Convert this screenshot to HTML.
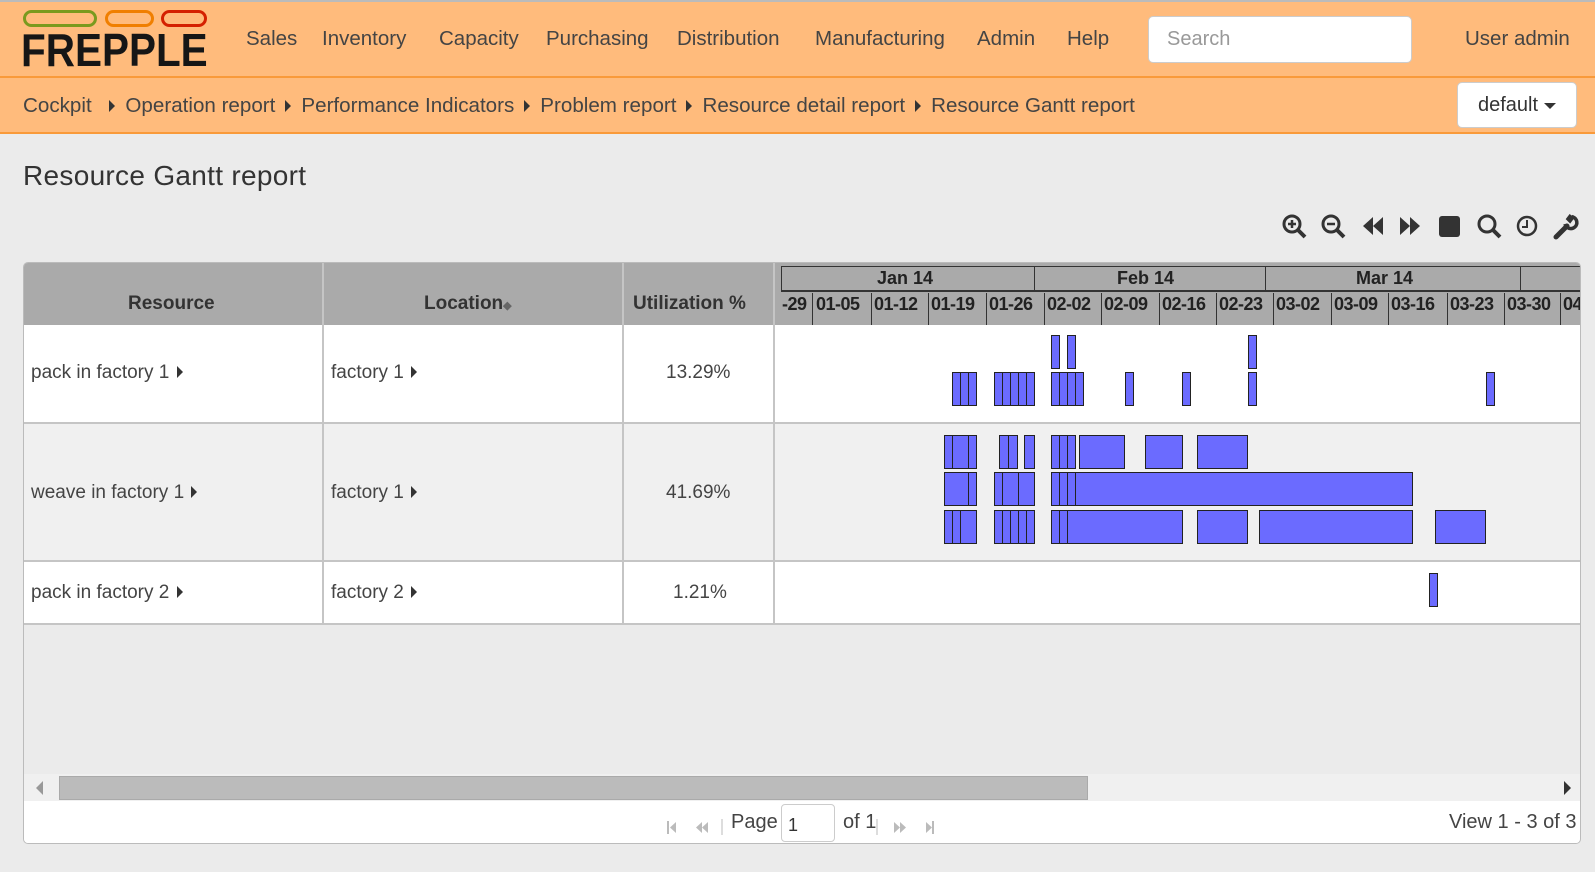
<!DOCTYPE html>
<html><head><meta charset="utf-8"><style>
*{box-sizing:border-box;margin:0;padding:0}
body{width:1595px;height:872px;background:#ebebeb;font-family:"Liberation Sans",sans-serif;color:#333;position:relative;overflow:hidden}
.a{position:absolute;white-space:nowrap}
.hdr{left:0;top:0;width:1595px;height:78px;background:#ffbb7c;border-top:2px solid #bbb;border-bottom:2px solid #f99a3a}
.bc{left:0;top:78px;width:1595px;height:56px;background:#ffbb7c;border-bottom:2px solid #f99a3a}
.nav{top:27px;font-size:20.5px;color:#444}
.crumb{top:94px;font-size:20.6px;color:#444}
.tri{display:inline-block;width:0;height:0;border-left:6px solid #333;border-top:6px solid transparent;border-bottom:6px solid transparent;margin:0 10px 1px 10px;vertical-align:middle}
.grid{left:23px;top:262px;width:1558px;height:582px;border:1px solid #bbb;border-radius:5px;background:#ebebeb;overflow:hidden}
.th{background:#aaa;height:62px;top:0}
.cell{font-size:19px;color:#444}
.vl{background:#c5c5c5;width:2px}
.hl{background:#c5c5c5;height:2px}
.b{position:absolute;background:#6b6bff;border:1.5px solid #222}
.wk{top:31px;font-size:18px;font-weight:bold;color:#222;letter-spacing:-0.5px}
.mo{top:5px;font-size:18px;font-weight:bold;color:#222}
.wd{top:30px;width:1px;height:32px;background:#333}
</style></head><body>
<div class="a hdr"></div>
<div class="a bc"></div>
<div class="a" style="left:23px;top:10px;width:74px;height:17px;border:3px solid #7a9a1e;border-radius:9px"></div>
<div class="a" style="left:105px;top:10px;width:49px;height:17px;border:3px solid #f07f00;border-radius:9px"></div>
<div class="a" style="left:161px;top:10px;width:46px;height:17px;border:3px solid #d42000;border-radius:9px"></div>
<div class="a" style="left:21px;top:28px;font-size:46px;font-weight:bold;color:#161616;transform:scaleX(0.88);transform-origin:left;line-height:44px">FREPPLE</div>
<div class="a nav" style="left:246px">Sales</div>
<div class="a nav" style="left:322px">Inventory</div>
<div class="a nav" style="left:439px">Capacity</div>
<div class="a nav" style="left:546px">Purchasing</div>
<div class="a nav" style="left:677px">Distribution</div>
<div class="a nav" style="left:815px">Manufacturing</div>
<div class="a nav" style="left:977px">Admin</div>
<div class="a nav" style="left:1067px">Help</div>
<div class="a" style="left:1148px;top:16px;width:264px;height:47px;background:#fff;border:1px solid #ccc;border-radius:5px;font-size:20px;color:#999;padding:11px 18px">Search</div>
<div class="a nav" style="left:1465px">User admin</div>
<div class="a crumb" style="left:23px">Cockpit <span class="tri" style="margin-left:12px"></span>Operation report<span class="tri"></span>Performance Indicators<span class="tri"></span>Problem report<span class="tri"></span>Resource detail report<span class="tri"></span>Resource Gantt report</div>
<div class="a" style="left:1457px;top:82px;width:120px;height:46px;background:#fff;border:1px solid #ccc;border-radius:5px;font-size:20px;color:#333;padding:11px 0 0 20px">default <span style="display:inline-block;border-top:6px solid #333;border-left:6px solid transparent;border-right:6px solid transparent;vertical-align:middle"></span></div>
<div class="a" style="left:23px;top:160px;font-size:28px;letter-spacing:0.3px;color:#333">Resource Gantt report</div>
<svg class="a" style="left:1280px;top:212px" width="310" height="28" viewBox="0 0 310 28" fill="none" stroke="#333" stroke-width="3">
<circle cx="12" cy="12" r="8"/><line x1="18" y1="18" x2="25" y2="25" stroke-width="4"/><line x1="8" y1="12" x2="16" y2="12" stroke-width="2.5"/><line x1="12" y1="8" x2="12" y2="16" stroke-width="2.5"/>
<g transform="translate(39,0)"><circle cx="12" cy="12" r="8"/><line x1="18" y1="18" x2="25" y2="25" stroke-width="4"/><line x1="8" y1="12" x2="16" y2="12" stroke-width="2.5"/></g>
<path d="M83 14 L93 5 V23 Z M93 14 L103 5 V23Z" fill="#333" stroke="none"/>
<path d="M120 5 L130 14 L120 23Z M130 5 L140 14 L130 23Z" fill="#333" stroke="none"/>
<rect x="159" y="4" width="21" height="21" rx="3" fill="#333" stroke="none"/>
<g transform="translate(196,0)"><circle cx="11" cy="12" r="8"/><line x1="17" y1="18" x2="24" y2="25" stroke-width="4"/></g>
<circle cx="247" cy="14" r="9" stroke-width="2.5"/><path d="M247 8 V15 H242" stroke-width="2"/>
<path d="M276 25 L287 14" stroke-width="5" stroke-linecap="round"/><path d="M285 12 A6 6 0 1 0 293 5 L290 9 L288 7 L291 3" stroke-width="3.5"/>
</svg>
<div class="a grid">
<div class="a th" style="left:0;width:1558px"></div>
<div class="a" style="left:0;top:62px;width:1558px;height:99px;background:#fff"></div>
<div class="a" style="left:0;top:161px;width:1558px;height:138px;background:#f0f0f0"></div>
<div class="a" style="left:0;top:299px;width:1558px;height:63px;background:#fff"></div>
<div class="a hl" style="left:0;top:159px;width:1558px"></div>
<div class="a hl" style="left:0;top:297px;width:1558px"></div>
<div class="a hl" style="left:0;top:360px;width:1558px"></div>
<div class="a vl" style="left:298px;top:0;height:362px"></div>
<div class="a vl" style="left:598px;top:0;height:362px"></div>
<div class="a vl" style="left:749px;top:0;height:362px"></div>
<div class="a cell" style="left:104px;top:30px;font-weight:bold;color:#333">Resource</div>
<div class="a cell" style="left:400px;top:30px;font-weight:bold;color:#333">Location<span style="font-size:11px;color:#666">&#9670;</span></div>
<div class="a cell" style="left:609px;top:30px;font-weight:bold;color:#333">Utilization %</div>
<div class="a cell" style="left:7px;top:99px">pack in factory 1 <span class="tri" style="margin:0 0 2px 2px"></span></div>
<div class="a cell" style="left:307px;top:99px">factory 1 <span class="tri" style="margin:0 0 2px 2px"></span></div>
<div class="a cell" style="left:642px;top:99px">13.29%</div>
<div class="a cell" style="left:7px;top:219px">weave in factory 1 <span class="tri" style="margin:0 0 2px 2px"></span></div>
<div class="a cell" style="left:307px;top:219px">factory 1 <span class="tri" style="margin:0 0 2px 2px"></span></div>
<div class="a cell" style="left:642px;top:219px">41.69%</div>
<div class="a cell" style="left:7px;top:319px">pack in factory 2 <span class="tri" style="margin:0 0 2px 2px"></span></div>
<div class="a cell" style="left:307px;top:319px">factory 2 <span class="tri" style="margin:0 0 2px 2px"></span></div>
<div class="a cell" style="left:649px;top:319px">1.21%</div>
<div class="a" style="left:757px;top:3px;width:801px;height:1px;background:#333"></div>
<div class="a" style="left:757px;top:27px;width:801px;height:2px;background:#333"></div>
<div class="a" style="left:757px;top:3px;width:1px;height:25px;background:#333"></div>
<div class="a" style="left:1010px;top:3px;width:1px;height:25px;background:#333"></div>
<div class="a" style="left:1241px;top:3px;width:1px;height:25px;background:#333"></div>
<div class="a" style="left:1496px;top:3px;width:1px;height:25px;background:#333"></div>
<div class="a mo" style="left:853px">Jan 14</div>
<div class="a mo" style="left:1093px">Feb 14</div>
<div class="a mo" style="left:1332px">Mar 14</div>
<div class="a wk" style="left:758px">-29</div>
<div class="a wk" style="left:792px">01-05</div>
<div class="a wk" style="left:850px">01-12</div>
<div class="a wk" style="left:907px">01-19</div>
<div class="a wk" style="left:965px">01-26</div>
<div class="a wk" style="left:1023px">02-02</div>
<div class="a wk" style="left:1080px">02-09</div>
<div class="a wk" style="left:1138px">02-16</div>
<div class="a wk" style="left:1195px">02-23</div>
<div class="a wk" style="left:1252px">03-02</div>
<div class="a wk" style="left:1310px">03-09</div>
<div class="a wk" style="left:1367px">03-16</div>
<div class="a wk" style="left:1426px">03-23</div>
<div class="a wk" style="left:1483px">03-30</div>
<div class="a wk" style="left:1539px">04</div>
<div class="a wd" style="left:788px"></div>
<div class="a wd" style="left:847px"></div>
<div class="a wd" style="left:904px"></div>
<div class="a wd" style="left:962px"></div>
<div class="a wd" style="left:1020px"></div>
<div class="a wd" style="left:1077px"></div>
<div class="a wd" style="left:1135px"></div>
<div class="a wd" style="left:1192px"></div>
<div class="a wd" style="left:1249px"></div>
<div class="a wd" style="left:1307px"></div>
<div class="a wd" style="left:1364px"></div>
<div class="a wd" style="left:1423px"></div>
<div class="a wd" style="left:1480px"></div>
<div class="a wd" style="left:1536px"></div>
<div class="a" style="left:0;top:511px;width:1558px;height:27px;background:#f0f0f0"></div>
<div class="a" style="left:35px;top:513px;width:1029px;height:24px;background:#bbb;border:1px solid #aaa"></div>
<div class="a" style="left:12px;top:518px;border-right:7px solid #999;border-top:7px solid transparent;border-bottom:7px solid transparent"></div>
<div class="a" style="left:1540px;top:518px;border-left:7px solid #333;border-top:7px solid transparent;border-bottom:7px solid transparent"></div>
<div class="a" style="left:0;top:538px;width:1558px;height:44px;background:#fff"></div>
<svg class="a" style="left:640px;top:554px" width="280" height="20" viewBox="0 0 280 20" fill="#bbb">
<rect x="3" y="4" width="2" height="13"/><path d="M6 10.5 L12 5 V16Z"/>
<path d="M32 10.5 L38 5 V16Z M38 10.5 L44 5 V16Z"/>
<rect x="57" y="2" width="2" height="16" fill="#ddd"/>
<rect x="212" y="2" width="2" height="16" fill="#ddd"/>
<path d="M230 5 L236 10.5 L230 16Z M236 5 L242 10.5 L236 16Z"/>
<path d="M262 5 L268 10.5 L262 16Z"/><rect x="268" y="4" width="2" height="13"/>
</svg>
<div class="a cell" style="left:707px;top:548px;font-size:20px">Page</div>
<div class="a" style="left:757px;top:541px;width:54px;height:38px;border:1px solid #ccc;border-radius:4px;background:#fff;font-size:18px;padding:10px 6px">1</div>
<div class="a cell" style="left:819px;top:548px;font-size:20px">of 1</div>
<div class="a cell" style="left:1425px;top:548px;font-size:20px">View 1 - 3 of 3</div>
</div>
<div class="b" style="left:1051px;top:335px;width:9px;height:34px"></div>
<div class="b" style="left:1067px;top:335px;width:9px;height:34px"></div>
<div class="b" style="left:1248px;top:335px;width:9px;height:34px"></div>
<div class="b" style="left:952px;top:372px;width:9px;height:34px"></div><div class="b" style="left:960px;top:372px;width:9px;height:34px"></div><div class="b" style="left:968px;top:372px;width:9px;height:34px"></div>
<div class="b" style="left:994px;top:372px;width:9px;height:34px"></div><div class="b" style="left:1002px;top:372px;width:9px;height:34px"></div><div class="b" style="left:1010px;top:372px;width:9px;height:34px"></div><div class="b" style="left:1018px;top:372px;width:9px;height:34px"></div><div class="b" style="left:1026px;top:372px;width:9px;height:34px"></div>
<div class="b" style="left:1051px;top:372px;width:9px;height:34px"></div><div class="b" style="left:1059px;top:372px;width:9px;height:34px"></div><div class="b" style="left:1067px;top:372px;width:9px;height:34px"></div><div class="b" style="left:1075px;top:372px;width:9px;height:34px"></div>
<div class="b" style="left:1125px;top:372px;width:9px;height:34px"></div>
<div class="b" style="left:1182px;top:372px;width:9px;height:34px"></div>
<div class="b" style="left:1248px;top:372px;width:9px;height:34px"></div>
<div class="b" style="left:1486px;top:372px;width:9px;height:34px"></div>
<div class="b" style="left:944px;top:435px;width:33px;height:34px"></div><div class="b" style="left:952px;top:435px;width:17px;height:34px"></div>
<div class="b" style="left:999px;top:435px;width:19px;height:34px"></div><div class="b" style="left:1008px;top:435px;width:10px;height:34px"></div>
<div class="b" style="left:1024px;top:435px;width:11px;height:34px"></div>
<div class="b" style="left:1051px;top:435px;width:25px;height:34px"></div><div class="b" style="left:1059px;top:435px;width:9px;height:34px"></div>
<div class="b" style="left:1079px;top:435px;width:46px;height:34px"></div>
<div class="b" style="left:1145px;top:435px;width:38px;height:34px"></div>
<div class="b" style="left:1197px;top:435px;width:51px;height:34px"></div>
<div class="b" style="left:944px;top:472px;width:33px;height:34px"></div><div class="b" style="left:944px;top:472px;width:25px;height:34px"></div>
<div class="b" style="left:994px;top:472px;width:41px;height:34px"></div><div class="b" style="left:994px;top:472px;width:9px;height:34px"></div><div class="b" style="left:1018px;top:472px;width:17px;height:34px"></div>
<div class="b" style="left:1051px;top:472px;width:362px;height:34px"></div><div class="b" style="left:1051px;top:472px;width:9px;height:34px"></div><div class="b" style="left:1059px;top:472px;width:9px;height:34px"></div><div class="b" style="left:1067px;top:472px;width:9px;height:34px"></div>
<div class="b" style="left:944px;top:510px;width:33px;height:34px"></div><div class="b" style="left:952px;top:510px;width:9px;height:34px"></div>
<div class="b" style="left:994px;top:510px;width:41px;height:34px"></div><div class="b" style="left:1002px;top:510px;width:9px;height:34px"></div><div class="b" style="left:1010px;top:510px;width:9px;height:34px"></div><div class="b" style="left:1018px;top:510px;width:9px;height:34px"></div>
<div class="b" style="left:1051px;top:510px;width:132px;height:34px"></div><div class="b" style="left:1051px;top:510px;width:9px;height:34px"></div><div class="b" style="left:1059px;top:510px;width:9px;height:34px"></div>
<div class="b" style="left:1197px;top:510px;width:51px;height:34px"></div>
<div class="b" style="left:1259px;top:510px;width:154px;height:34px"></div>
<div class="b" style="left:1435px;top:510px;width:51px;height:34px"></div>
<div class="b" style="left:1429px;top:573px;width:9px;height:34px"></div>
</body></html>
